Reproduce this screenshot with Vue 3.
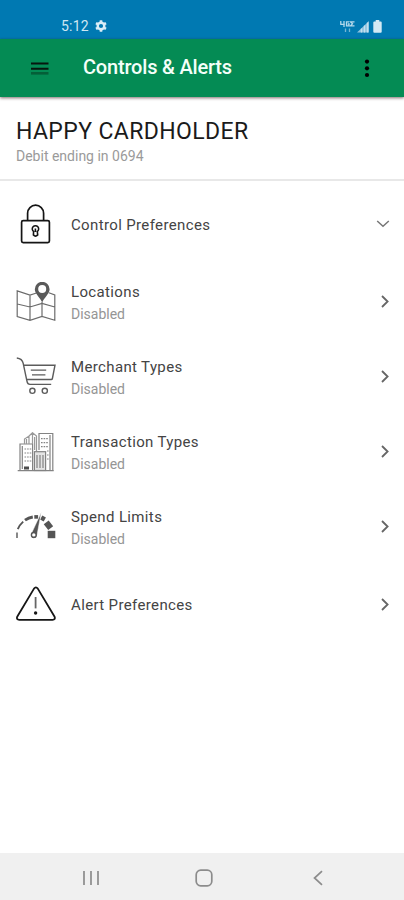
<template>
  <div class="screen">
    <div class="status-bar">
      <span class="time">5:12</span>
      <svg class="gear" width="12" height="12" viewBox="0 0 12 12">
        <circle cx="6" cy="6" r="3.3" fill="none" stroke="#d9edf7" stroke-width="2.4" />
        <path d="M6 .2v2.2M6 9.6v2.2M1 3.1l1.9 1.1M9.1 7.8 11 8.9M1 8.9l1.9-1.1M9.1 4.2 11 3.1" stroke="#d9edf7" stroke-width="2.6" />
      </svg>
      <svg class="network" width="15" height="13" viewBox="0 0 15 13" fill="none" stroke="#b4d9eb">
        <path d="M.8 1v3.4h4M4 1v6M9 1.8H6.5v4H9V4H7.8M14.5 1.8h-4l2 2-2 2h4" stroke-width="1.3" />
        <path d="M5.5 8.5v3.5M9.5 8.5v3.5" stroke="#75b5d5" stroke-width="1.3" />
      </svg>
      <svg class="signal" width="13" height="13" viewBox="0 0 13 13">
        <path d="M0 12.5 12 1v11.5z" fill="#8fc3df" />
        <path d="M4.5 8.5v4M7.5 5.5v7M10.5 2.5v10" stroke="#c4e0ee" stroke-width="1.3" />
      </svg>
      <svg class="battery" width="9" height="13" viewBox="0 0 9 13">
        <path d="M2.7 0h3.6v1.6h1.4q1 0 1 1v9.2q0 1-1 1H1.3q-1 0-1-1V2.6q0-1 1-1h1.4z" fill="#d3eaf4" />
      </svg>
    </div>

    <header class="toolbar">
      <svg class="menu" width="18" height="13" viewBox="0 0 18 13">
        <path d="M0 1.5h17.5M0 6.7h17.5" stroke="#06170e" stroke-width="2" />
        <path d="M0 11.3h17.5" stroke="#045f38" stroke-width="2.6" />
      </svg>
      <h1>Controls &amp; Alerts</h1>
      <svg class="more" width="6" height="19" viewBox="0 0 6 19">
        <circle cx="3" cy="2.6" r="2.1" />
        <circle cx="3" cy="9.3" r="2.1" />
        <circle cx="3" cy="16" r="2.1" />
      </svg>
    </header>

    <section class="card-info">
      <h2>HAPPY CARDHOLDER</h2>
      <p>Debit ending in 0694</p>
    </section>

    <main class="list">
      <div v-for="item in items" :key="item.icon" class="row" :class="{ tall: !item.status }">
        <svg v-if="item.icon === 'lock'" class="icon" viewBox="0 0 40 40" fill="none" stroke="#151515" stroke-width="1.7">
          <rect x="5.6" y="16.6" width="27.8" height="22" rx="1.6" />
          <path d="M11.6 16.5V9.2a8 8 0 0 1 16 0v7.3" />
          <path d="M17.6 27.5a3.2 3.2 0 1 1 3.7 0l.4 3.4q-2.2 2.4-4.3 0zM19.4 24.6v3.5" stroke-width="1.6" />
        </svg>
        <svg v-else-if="item.icon === 'map'" class="icon" viewBox="0 0 40 40" fill="none" stroke="#6c6c6c" stroke-width="1.2">
          <path d="M20.5 11 14 13 1.2 8.9v25.6L14 38.3l12-3.8 12.8 3.8V13l-6-2.2M1.2 22l12.8 3 12-3.6L38.8 25M14 13v25.3M26 20v14.5" />
          <path d="M26.2 20.5c-1.4-4.4-7.4-8.6-7.4-13.3a7.4 7.4 0 0 1 14.8 0c0 4.7-6 8.9-7.4 13.3z" fill="#5a5a5a" stroke="none" />
          <circle cx="26.2" cy="7" r="4" fill="#fff" stroke="none" />
        </svg>
        <svg v-else-if="item.icon === 'cart'" class="icon" viewBox="0 0 40 40" fill="none" stroke="#5c5c5c" stroke-width="1.4">
          <path d="M.8 1q5.5.7 6.4 5.4L11 24.4M7.5 8.2H39l-2.6 13.3q-.2 1-1.2 1H10.6M11 24.4q.5 3 3 3h21.2" />
          <path d="M14.8 13.2h15.4M16 17.8h13.4" stroke-width="1.3" />
          <circle cx="16.4" cy="33.8" r="2.6" />
          <circle cx="28.8" cy="33.8" r="2.6" />
        </svg>
        <svg v-else-if="item.icon === 'buildings'" class="icon" viewBox="0 0 40 40" fill="none" stroke="#838383" stroke-width="1.2">
          <path d="M23 18V1.5h13.8v37M34 3v35" />
          <path d="M4 38V12h12.6v26.6M6.3 14V37" />
          <path d="M8.5 12V7L13 4v8M13 4l3.5-3.3L20.5 4v15M10.5 7v5M16.5 1v11M18.6 5v13" stroke="#999" />
          <rect x="18.4" y="19.7" width="11.2" height="18.8" fill="#e4e4e4" />
          <path d="M21 23v13M24 23v13M27 23v13" />
          <path d="M25 6.7h7M25 10.7h7M25 14.7h7M31 19h2M31 23h2M31 27h2M8.5 17h7M8.5 21h7M8.5 25h7M8.5 29h7" stroke-dasharray="1.6 1" />
          <path d="M8 36h5" stroke="#4c4c4c" stroke-width="3" />
          <path d="M1.7 38.6h36" />
        </svg>
        <svg v-else-if="item.icon === 'gauge'" class="icon" viewBox="0 0 40 40" fill="none" stroke="#555">
          <path d="M1 31v-5.5" stroke-width="1.4" />
          <path d="M1.8 22.2Q3.6 17.8 7.2 14.6" stroke-width="1.9" />
          <path d="M9 13.1q3.6-2.6 7.8-3.2" stroke-width="3" />
          <path d="M18.3 9.9h3.8" stroke-width="3.6" />
          <path d="m25.2 10.6 3.6 2" stroke-width="4.6" />
          <path d="m30.2 15.4 4.5 5.8" stroke-width="6.2" />
          <path d="M35.5 23.8v7.4" stroke-width="7.6" />
          <path d="M25.2 5.5 15.3 26.8a3 3 0 1 0 5.6 2z" fill="#555" stroke="#fff" stroke-width=".5" />
          <circle cx="17.8" cy="27.9" r="2.4" fill="#fff" stroke-width="1.4" />
        </svg>
        <svg v-else class="icon" viewBox="0 0 40 40" fill="none" stroke="#161616" stroke-width="1.8">
          <path d="M18 4.6q1.9-2.4 3.8 0l16.8 28.2q1 3-2 3H3.2q-3 0-2-3z" stroke-linejoin="round" />
          <path d="M19.6 13v11.4" stroke="#666" stroke-width="1.8" />
          <circle cx="19.6" cy="29" r="1.7" fill="#161616" stroke="none" />
        </svg>

        <div class="label">
          <span class="name">{{ item.name }}</span>
          <span v-if="item.status" class="status">{{ item.status }}</span>
        </div>

        <svg v-if="item.open" class="chevron down" width="14" height="8" viewBox="0 0 14 8">
          <path d="m1.2 1 5.8 5.2L12.8 1" />
        </svg>
        <svg v-else class="chevron" width="8" height="13" viewBox="0 0 8 13">
          <path d="m1 1 5.6 5.5L1 12" />
        </svg>
      </div>
    </main>

    <nav class="nav-bar">
      <svg width="16" height="16" viewBox="0 0 16 16">
        <path d="M1 1v14M8 1v14M15 1v14" />
      </svg>
      <svg class="home" width="18" height="18" viewBox="0 0 18 18">
        <rect x="1.2" y="1.2" width="15.6" height="15.6" rx="4.5" />
      </svg>
      <svg width="10" height="16" viewBox="0 0 10 16">
        <path d="M9 1.2 1.5 8 9 14.8" />
      </svg>
    </nav>
  </div>
</template>

<script setup>
const items = [
  { icon: 'lock', name: 'Control Preferences', open: true },
  { icon: 'map', name: 'Locations', status: 'Disabled' },
  { icon: 'cart', name: 'Merchant Types', status: 'Disabled' },
  { icon: 'buildings', name: 'Transaction Types', status: 'Disabled' },
  { icon: 'gauge', name: 'Spend Limits', status: 'Disabled' },
  { icon: 'alert', name: 'Alert Preferences' },
];
</script>

<style>
body {
  margin: 0;
}
</style>

<style scoped>
.screen {
  display: flex;
  flex-direction: column;
  height: 900px;
  background: #fff;
  font-family: Roboto, Arial, sans-serif;
}

h1,
h2,
p {
  margin: 0;
}

svg {
  flex: none;
}

.status-bar {
  display: flex;
  align-items: center;
  box-sizing: border-box;
  height: 39px;
  padding: 13px 22px 0 61px;
  background: #0079b2;
}

.time {
  color: #cfe7f3;
  font-size: 14px;
  letter-spacing: 0.2px;
}

.gear {
  margin-left: 6px;
}

.network {
  margin-left: auto;
}

.signal {
  margin-left: 2px;
}

.battery {
  margin-left: 3px;
}

.toolbar {
  display: flex;
  align-items: center;
  box-sizing: border-box;
  height: 58px;
  padding: 0 34px 0 31px;
  background: #048b54;
  box-shadow: 0 1px 3px rgba(40, 10, 10, 0.6);
}

.toolbar h1 {
  flex: 1;
  margin: -2px 0 0 34px;
  color: #f4fff9;
  font-size: 20px;
  font-weight: 500;
  letter-spacing: -0.19px;
}

.card-info {
  box-sizing: border-box;
  height: 84px;
  padding: 20px 16px 0;
  border-bottom: 2px solid #e8e8e8;
}

.card-info h2 {
  color: #1a1a1a;
  font-size: 23px;
  font-weight: 400;
  line-height: 29px;
  letter-spacing: 0.38px;
}

.card-info p {
  margin-top: 1px;
  color: #9a9a9a;
  font-size: 14px;
  line-height: 18px;
}

.list {
  flex: 1;
  padding-top: 3px;
}

.row {
  display: flex;
  align-items: center;
  height: 75px;
  padding: 0 15px 0 16px;
}

.row.tall {
  height: 80px;
}

.icon {
  width: 40px;
  height: 40px;
}

.label {
  display: flex;
  flex: 1;
  flex-direction: column;
  gap: 3px;
  margin-left: 15px;
  padding-top: 2px;
}

.name {
  color: #444;
  font-size: 15px;
  line-height: 20px;
  letter-spacing: 0.36px;
}

.status {
  color: #959595;
  font-size: 14px;
  line-height: 18px;
}

.chevron {
  fill: none;
  stroke: #666;
  stroke-width: 1.8;
}

.chevron.down {
  margin-right: -1px;
  stroke: #777;
  stroke-width: 1.5;
}

.nav-bar {
  display: flex;
  align-items: center;
  justify-content: space-between;
  box-sizing: border-box;
  height: 47px;
  padding: 2px 81px 0 83px;
  background: #f0f0f0;
}

.nav-bar svg {
  fill: none;
  stroke: #8c8c8c;
  stroke-width: 1.7;
}

.nav-bar .home {
  margin-right: 4px;
}
</style>
